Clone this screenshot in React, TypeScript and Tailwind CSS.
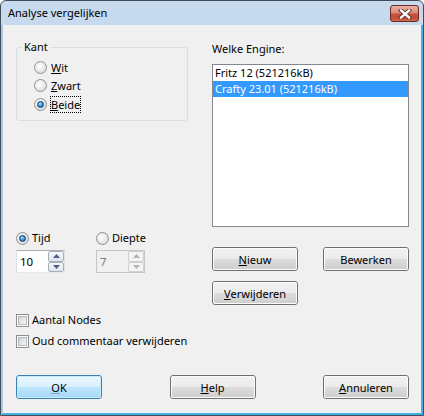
import React from "react";

function Radio({ checked, disabled }: { checked?: boolean; disabled?: boolean }) {
  return (
    <span
      className={`flex h-[13px] w-[13px] shrink-0 items-center justify-center rounded-full border ${
        disabled ? "border-[#b5b5b5]" : "border-[#8f9294]"
      } bg-[radial-gradient(circle_at_40%_40%,#ffffff_0%,#ececec_45%,#cdcdcd_100%)]`}
    >
      {checked && (
        <span className="h-[7px] w-[7px] rounded-full border border-[#123f6c] bg-[radial-gradient(circle_at_40%_35%,#b4ecff_0%,#3a9ae4_45%,#0d4a8a_100%)]" />
      )}
    </span>
  );
}

function Check() {
  return (
    <span className="flex h-[13px] w-[13px] shrink-0 border border-[#8e8f8f] bg-white p-[1px]">
      <span className="h-full w-full border border-[#b4b7bb] bg-[linear-gradient(135deg,#cdd0d4_0%,#e8e9ea_60%,#f8f8f8_100%)]" />
    </span>
  );
}

function Tri({ up, color }: { up?: boolean; color: string }) {
  return (
    <svg width="7" height="4" viewBox="0 0 7 4">
      {up ? <path d="M0 4 L3.5 0 L7 4 Z" fill={color} /> : <path d="M0 0 L3.5 4 L7 0 Z" fill={color} />}
    </svg>
  );
}

function Spin({ value, disabled }: { value: string; disabled?: boolean }) {
  return (
    <div
      className={`flex h-[23px] w-[49px] border ${
        disabled
          ? "border-[#c3c6c9] bg-[#f0f0f0] text-[#7a7a7a]"
          : "border-[#abadb3] border-l-[#dbdfe6] border-r-[#dbdfe6] border-b-[#e3e9ef] bg-white text-black"
      }`}
    >
      <div className="flex-1 pl-[3px] text-[11.5px] leading-[21px]">{value}</div>
      <div className="flex w-[16px] flex-col">
        <div
          className={`flex flex-1 items-center justify-center rounded-[2px] border ${
            disabled
              ? "border-[#cdd0d3] bg-[#f4f4f4]"
              : "border-[#a6aeb8] bg-[linear-gradient(#f7f9fb,#dfe5ec)]"
          }`}
        >
          <Tri up color={disabled ? "#b3b3b3" : "#4c6189"} />
        </div>
        <div
          className={`flex flex-1 items-center justify-center rounded-[2px] border ${
            disabled
              ? "border-[#cdd0d3] bg-[#f4f4f4]"
              : "border-[#a6aeb8] bg-[linear-gradient(#f7f9fb,#dfe5ec)]"
          }`}
        >
          <Tri color={disabled ? "#b3b3b3" : "#4c6189"} />
        </div>
      </div>
    </div>
  );
}

function Btn({ children, def }: { children: React.ReactNode; def?: boolean }) {
  return (
    <button
      className={`h-[24px] w-[86px] rounded-[3px] border p-0 ${def ? "border-[#3c7fb1]" : "border-[#707070]"}`}
    >
      <span
        className={`flex h-full w-full items-center justify-center whitespace-nowrap rounded-[2px] border text-[11px] leading-none text-black ${
          def
            ? "border-[#c6ecfc] bg-[linear-gradient(#eaf6fd_0%,#d9f0fc_50%,#bee6fd_50%,#a7d9f5_100%)]"
            : "border-[#fcfcfc] bg-[linear-gradient(#f2f2f2_0%,#ebebeb_50%,#dddddd_50%,#cfcfcf_100%)]"
        }`}
      >
        {children}
      </span>
    </button>
  );
}

export default function App() {
  return (
    <div className="h-[416px] w-[424px] bg-white font-['Noto_Sans',sans-serif] text-[11px] text-black">
      <div className="flex h-[416px] w-[424px] flex-col overflow-hidden rounded-t-[6px] border border-[#424c59] bg-[linear-gradient(#c8daee,#b4cbe6)]">
        {/* Title bar */}
        <div className="flex h-[24px] shrink-0 items-start justify-between pl-[7px] pr-[4px]">
          <span className="text-[11px] leading-[24px] text-black">Analyse vergelijken</span>
          <div className="mt-[4px] flex h-[17px] w-[29px] items-center justify-center rounded-[3px] border border-[#6b2b27] bg-[linear-gradient(#eab3a6_0%,#d98874_48%,#c5533e_52%,#c44b36_80%,#d36a4d_100%)]">
            <svg width="14" height="10" viewBox="0 0 14 10">
              <path d="M3 1.5 L11 8.5 M11 1.5 L3 8.5" stroke="#5e2d27" strokeWidth="4.2" strokeLinecap="square" />
              <path d="M3 1.5 L11 8.5 M11 1.5 L3 8.5" stroke="#ffffff" strokeWidth="2.4" strokeLinecap="square" />
            </svg>
          </div>
        </div>
        {/* Frame */}
        <div className="flex flex-1 border-b-2 border-l-2 border-r-2 border-b-[#47b0e2] border-l-[#abc7e6] border-r-[#47b0e2]">
          <div className="flex flex-1 flex-col bg-[#f0f0f0] pl-[13px] pr-[12px]">
            <div className="flex">
              {/* Left column */}
              <div className="flex w-[172px] flex-col">
                <fieldset className="mt-[13px] h-[83px] rounded-[3px] border border-[#d5dfe5]">
                  <legend className="ml-[5px] px-[2px] leading-[18px]">Kant</legend>
                  <div className="flex flex-col pl-[17px] pt-[2px]">
                    <div className="flex h-[18px] items-center gap-[3px]">
                      <Radio />
                      <span className="border border-transparent leading-[15px]">
                        <u>W</u>it
                      </span>
                    </div>
                    <div className="flex h-[19px] items-center gap-[3px]">
                      <Radio />
                      <span className="border border-transparent leading-[15px]">
                        <u>Z</u>wart
                      </span>
                    </div>
                    <div className="flex h-[18px] items-center gap-[3px]">
                      <Radio checked />
                      <span className="border border-dotted border-black leading-[15px]">
                        <u>B</u>eide
                      </span>
                    </div>
                  </div>
                </fieldset>

                <div className="mt-[109px] flex">
                  <div className="flex w-[80px] flex-col">
                    <div className="flex h-[16px] items-center gap-[3px]">
                      <Radio checked />
                      <span className="leading-[16px]">Tijd</span>
                    </div>
                    <div className="mt-[4px]">
                      <Spin value="10" />
                    </div>
                  </div>
                  <div className="flex flex-col">
                    <div className="flex h-[16px] items-center gap-[3px]">
                      <Radio />
                      <span className="leading-[16px]">Diepte</span>
                    </div>
                    <div className="mt-[4px]">
                      <Spin value="7" disabled />
                    </div>
                  </div>
                </div>

                <div className="mt-[39px] flex h-[16px] items-center gap-[3px] whitespace-nowrap">
                  <Check />
                  <span className="leading-[16px]">Aantal Nodes</span>
                </div>
                <div className="mt-[5px] flex h-[16px] items-center gap-[3px] whitespace-nowrap">
                  <Check />
                  <span className="leading-[16px]">Oud commentaar verwijderen</span>
                </div>
              </div>

              {/* Right column */}
              <div className="ml-[24px] flex w-[197px] flex-col">
                <div className="mt-[16px] leading-[16px]">Welke Engine:</div>
                <div className="mt-[7px] flex h-[163px] flex-col border border-[#828790] bg-white">
                  <div className="h-[16px] whitespace-nowrap pl-[2px] leading-[16px]">Fritz 12 (521216kB)</div>
                  <div className="h-[16px] whitespace-nowrap bg-[#3399ff] pl-[2px] leading-[16px] text-white">
                    Crafty 23.01 (521216kB)
                  </div>
                </div>
                <div className="mt-[20px] flex justify-between">
                  <Btn>
                    <u>N</u>ieuw
                  </Btn>
                  <Btn>Bewerken</Btn>
                </div>
                <div className="mt-[10px] flex">
                  <Btn>
                    <u>V</u>erwijderen
                  </Btn>
                </div>
              </div>
            </div>

            {/* Bottom buttons */}
            <div className="mt-[26px] flex justify-between">
              <Btn def>
                <span className="underline decoration-[#8aa2b5]">O</span>K
              </Btn>
              <Btn>
                <u>H</u>elp
              </Btn>
              <Btn>
                <u>A</u>nnuleren
              </Btn>
            </div>
          </div>
        </div>
      </div>
    </div>
  );
}
